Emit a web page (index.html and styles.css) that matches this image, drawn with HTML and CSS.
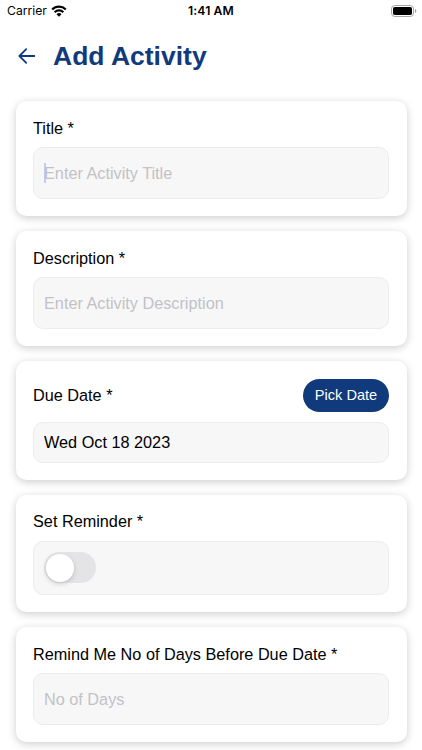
FILE: index.html
```html
<!DOCTYPE html>
<html lang="en">
<head>
<meta charset="utf-8">
<title>Add Activity</title>
<link rel="stylesheet" href="styles.css">
</head>
<body>
<div class="status">
  <div class="carrier"><span>Carrier</span>
    <svg class="wifi" width="16" height="12" viewBox="0 0 16 12" fill="none" stroke="#000" stroke-width="2.2"><path d="M1.2 4.5a9.7 9.7 0 0 1 13.6 0M3.7 7.2a6.1 6.1 0 0 1 8.6 0"/><path d="M8 11.8 5.5 9.3a3.5 3.5 0 0 1 5 0z" fill="#000" stroke="none"/></svg>
  </div>
  <div class="time">1:41 AM</div>
  <svg class="battery" width="26" height="12" viewBox="0 0 26 12"><rect x=".5" y=".5" width="22" height="11" rx="3.3" fill="#fff" stroke="#a6a6a6"/><rect x="2" y="2" width="19" height="8" rx="1.8"/><path d="M24 4v4c1.8-.7 1.8-3.3 0-4z" fill="#999"/></svg>
</div>
<header class="header">
  <svg class="back" width="18" height="16" viewBox="0 0 18 16" fill="none" stroke="#113a7d" stroke-width="1.8" stroke-linecap="round" stroke-linejoin="round"><path d="M16.3 8H1.6M8.2 1.2 1.4 8l6.8 6.8"/></svg>
  <h1>Add Activity</h1>
</header>
<main class="form">
  <section class="card">
    <div class="label">Title *</div>
    <div class="field placeholder"><span class="caret"></span>Enter Activity Title</div>
  </section>
  <section class="card">
    <div class="label">Description *</div>
    <div class="field placeholder">Enter Activity Description</div>
  </section>
  <section class="card due">
    <div class="row"><div class="label">Due Date *</div><button class="pick">Pick Date</button></div>
    <div class="field">Wed Oct 18 2023</div>
  </section>
  <section class="card reminder">
    <div class="label">Set Reminder *</div>
    <div class="field"><span class="switch"><span class="knob"></span></span></div>
  </section>
  <section class="card">
    <div class="label">Remind Me No of Days Before Due Date *</div>
    <div class="field placeholder">No of Days</div>
  </section>
</main>
</body>
</html>
```
FILE: styles.css
```css
* { box-sizing: border-box; }
body {
  margin: 0;
  height: 750px;
  overflow: hidden;
  background: #fff;
  color: #000;
  font-family: "Liberation Sans", Arial, sans-serif;
  font-size: 16.25px;
}
.status {
  display: grid;
  grid-template-columns: 1fr auto 1fr;
  align-items: center;
  height: 22px;
  padding: 0 5px 0 7px;
  font: 12.2px/22px Inter, sans-serif;
}
.carrier { display: flex; align-items: center; gap: 4px; }
.time { font-weight: 600; letter-spacing: .1px; margin-left: -2px; }
.battery { justify-self: end; }
.header {
  display: flex;
  align-items: center;
  height: 68px;
  padding-left: 18px;
  gap: 17px;
}
h1 { margin: 0; color: #113a7d; font-size: 26.5px; line-height: 32px; }
.form {
  display: flex;
  flex-direction: column;
  gap: 15px;
  padding: 11px 15.5px 0;
}
.card {
  flex: none;
  height: 115px;
  padding: 17.5px;
  background: #fff;
  border-radius: 10.5px;
  box-shadow: 0 2px 8px rgba(0, 0, 0, .2);
}
.label { height: 19px; line-height: 19px; white-space: nowrap; }
.field {
  display: flex;
  align-items: center;
  height: 51.5px;
  margin-top: 9.9px;
  padding: 0 10px;
  border: 1px solid #ececec;
  border-radius: 10px;
  background: #f7f7f7;
}
.placeholder { color: #c2c2c5; }
.caret { width: 2px; height: 20px; margin-right: -2px; background: #c3cbf5; }
.due { height: 118.5px; }
.row { display: flex; align-items: center; justify-content: space-between; height: 33px; }
.due .field { height: 41px; margin-top: 10px; }
.pick {
  width: 86px;
  height: 33px;
  padding: 0;
  border: 0;
  border-radius: 17px;
  background: #113a7d;
  color: #fff;
  font: 14.6px "Liberation Sans", Arial, sans-serif;
}
.reminder { height: 117.5px; }
.reminder .field { height: 54px; margin-top: 9.5px; }
.switch {
  width: 52px;
  height: 31px;
  padding: 1.5px;
  border-radius: 16px;
  background: #e4e4e6;
}
.knob {
  display: block;
  width: 28px;
  height: 28px;
  border-radius: 50%;
  background: #fff;
  box-shadow: 0 2px 5px rgba(0, 0, 0, .16);
}
```
